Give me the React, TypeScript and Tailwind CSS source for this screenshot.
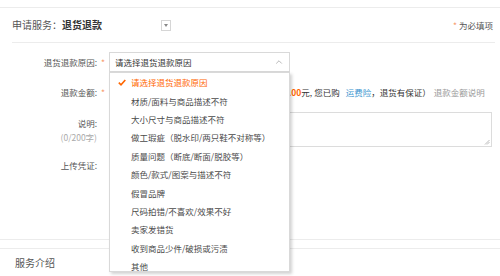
import React from 'react';
import { ChevronUp } from 'lucide-react';

const reasons = [
  '请选择退货退款原因',
  '材质/面料与商品描述不符',
  '大小尺寸与商品描述不符',
  '做工瑕疵（脱水印/两只鞋不对称等）',
  '质量问题（断底/断面/脱胶等）',
  '颜色/款式/图案与描述不符',
  '假冒品牌',
  '尺码拍错/不喜欢/效果不好',
  '卖家发错货',
  '收到商品少件/破损或污渍',
  '其他',
];

function Label({ text, required }: { text: string; required?: boolean }) {
  return (
    <div className="flex shrink-0">
      <span className="w-[97px] text-right text-[#555]">{text}</span>
      <span className="w-[12px] text-center text-[#f79b6b]">{required ? '*' : ''}</span>
    </div>
  );
}

export default function App() {
  return (
    <div
      className="relative w-[500px] h-[276px] overflow-hidden bg-white text-[8.5px] leading-[14px] text-[#333]"
      style={{ fontFamily: '"Noto Sans CJK SC", "Noto Sans", sans-serif' }}
    >
      <div className="h-[7px]" />
      <div className="border-t border-[#ececec]" />

      {/* header */}
      <div className="ml-[12px] mr-[5px] h-[35px] flex items-center border-b border-[#ececec] text-[10px]">
        <span className="text-[#555]">申请服务：</span>
        <span className="font-bold text-[#333]">退货退款</span>
        <span className="ml-[59px] w-[10px] h-[11px] border border-[#d6d6d6] flex items-start justify-center pt-[3px]">
          <span className="w-0 h-0 border-l-[2.5px] border-r-[2.5px] border-t-[3px] border-l-transparent border-r-transparent border-t-[#888]" />
        </span>
        <span className="ml-auto mr-[2px] text-[8.5px] text-[#555]">
          <span className="text-[#f79b6b] mr-[2px]">*</span>为必填项
        </span>
      </div>

      {/* form */}
      <div className="pt-[9px] border-b border-[#ececec] h-[197px]">
        <div className="flex items-center h-[20px]">
          <Label text="退货退款原因:" required />
          <div className="relative">
            <div className="w-[181px] h-[20px] border border-[#d9d9d9] flex items-center pl-[5px] pr-[5px]">
              <span className="text-[#333]">请选择退货退款原因</span>
              <ChevronUp className="ml-auto w-[10px] h-[10px] text-[#aaa]" strokeWidth={2} />
            </div>
            <div className="absolute left-0 top-[20px] z-10 w-[181px] h-[200px] bg-white border border-[#d9d9d9] shadow-[2px_2px_3px_rgba(0,0,0,0.18)]">
              {reasons.map((r, i) => (
                <div key={r} className="h-[18.4px] flex items-center">
                  <span className="w-[21px] flex justify-center pl-[2px]">
                    {i === 0 && (
                      <svg width="8" height="7" viewBox="0 0 8 7">
                        <path d="M0.8 3.6 L3 5.8 L7.3 1" fill="none" stroke="#f60" strokeWidth="1.6" />
                      </svg>
                    )}
                  </span>
                  <span className={i === 0 ? 'text-[#f60]' : 'text-[#4a4a4a]'}>{r}</span>
                </div>
              ))}
            </div>
          </div>
        </div>

        <div className="flex items-center h-[20px] mt-[10px] whitespace-nowrap">
          <Label text="退款金额:" required />
          <div className="w-[135px] shrink-0 h-[20px] border border-[#d9d9d9]" />
          <span className="ml-[4px] shrink-0">（最多 </span>
          <span className="text-[#f60] font-bold shrink-0">100.00</span>
          <span className="shrink-0">元, 您已购</span>
          <span className="text-[#3a95cf] shrink-0 ml-[6px]">运费险</span>
          <span className="shrink-0">，退货有保证）</span>
          <span className="text-[#999] shrink-0 ml-[3px]">退款金额说明</span>
        </div>

        <div className="flex mt-[10px]">
          <div className="flex flex-col shrink-0 pt-[3.5px]">
            <Label text="说明:" />
            <span className="w-[97px] text-right text-[#aaa]">(0/200字)</span>
          </div>
          <div className="relative w-[383px] h-[35px] border border-[#dcdcdc]">
            <svg className="absolute right-[1px] bottom-[1px]" width="6" height="6" viewBox="0 0 6 6">
              <path d="M1 5.5 L5.5 1 M3 5.5 L5.5 3" stroke="#aaa" strokeWidth="0.8" />
            </svg>
          </div>
        </div>

        <div className="flex items-center h-[20px] mt-[8px]">
          <Label text="上传凭证:" />
          <div className="w-[60px] h-[20px] border border-[#d9d9d9]" />
        </div>
      </div>

      <div className="h-[8px]" />
      <div className="border-t border-[#ececec] h-[28px] flex items-center pl-[15px] text-[10px] text-[#555]">
        服务介绍
      </div>
    </div>
  );
}
